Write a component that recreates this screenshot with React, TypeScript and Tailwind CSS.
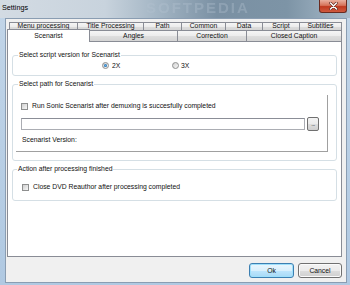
import React from "react";

const tabBg = "bg-[linear-gradient(180deg,#f5f5f5_0%,#ececec_50%,#dedede_51%,#d4d4d4_100%)]";

function Radio({ checked }: { checked?: boolean }) {
  return (
    <span className="w-[7px] h-[7px] rounded-full border border-[#8e8f8f] bg-[linear-gradient(135deg,#d0d0d0,#f8f8f8)] flex items-center justify-center shrink-0">
      {checked && <span className="w-[3px] h-[3px] rounded-full bg-[radial-gradient(circle,#5fb2ef,#0b4f8f)]" />}
    </span>
  );
}

function Check() {
  return (
    <span className="w-[7px] h-[7px] border border-[#8e8f8f] bg-[linear-gradient(135deg,#cfcfcf,#f7f7f7)] shrink-0" />
  );
}

function Group({ label, labelLeft, className, children }: { label: string; labelLeft: string; className: string; children?: React.ReactNode }) {
  return (
    <div className={`relative border border-[#d5dfe5] rounded-[3px] ${className}`}>
      <span className={`absolute top-[-5px] ${labelLeft} px-[1px] bg-white leading-[8px] whitespace-nowrap`}>{label}</span>
      {children}
    </div>
  );
}

export default function App() {
  const row1: [string, string][] = [
    ["Menu processing", "w-[68px]"],
    ["Title Processing", "w-[66px]"],
    ["Path", "w-[38px]"],
    ["Common", "w-[44px]"],
    ["Data", "w-[37px]"],
    ["Script", "w-[37px]"],
    ["Subtitles", "w-[43px]"],
  ];
  return (
    <div className="w-[350px] h-[285px] overflow-hidden flex flex-col bg-[linear-gradient(180deg,#c2d5e8,#b0c9e2)] font-['Liberation_Sans',Arial,sans-serif] text-[6.8px] text-[#111]">
      {/* title bar */}
      <div className="relative h-[18px] shrink-0 overflow-hidden flex justify-between items-start bg-[linear-gradient(90deg,#d3dbe3_0%,#c8d3dd_30%,#a3b5c4_45%,#7a90a3_62%,#7d94a6_82%,#aabccb_100%)]">
        <span className="absolute left-[146px] top-[0px] text-[15px] leading-[16px] font-bold tracking-[2px] text-[#b4c4d1]/35 blur-[0.7px]">SOFTPEDIA</span>
        <span className="relative pl-[2px] pt-[3px] text-[7.2px] leading-[9px] text-black">Settings</span>
        <div className="relative mr-[3px] w-[28px] h-[13px] rounded-b-[3px] border border-t-0 border-[#6a2b20] bg-[linear-gradient(180deg,#e9b0a0_0%,#d6735a_45%,#c0391f_55%,#cf5a3f_100%)] flex items-center justify-center">
          <svg width="9" height="8" viewBox="0 0 9 8">
            <path d="M1.5 1 L7.5 7 M7.5 1 L1.5 7" stroke="#5a2118" strokeWidth="2.6" strokeLinecap="round" />
            <path d="M1.5 1 L7.5 7 M7.5 1 L1.5 7" stroke="#ffffff" strokeWidth="1.5" strokeLinecap="round" />
          </svg>
        </div>
      </div>

      {/* client */}
      <div className="flex-1 ml-[5px] mr-[3px] mb-[2px] border border-[#8a9db2] bg-[#f0f0f0] flex flex-col">
        <div className="pl-[1px] pr-[4px]">
          {/* row 1 */}
          <div className="mt-[3px] h-[8px] pl-[2px] flex">
            {row1.map(([t, w], i) => (
              <div
                key={t}
                className={`${w} h-full border-t border-l ${i === row1.length - 1 ? "border-r" : ""} border-[#898c95] ${tabBg} flex items-start justify-center leading-[6px] whitespace-nowrap`}
              >
                {t}
              </div>
            ))}
          </div>
          {/* row 2 */}
          <div className="h-[11px] flex items-end">
            <div className="relative z-10 w-[83px] h-[13px] -mb-px border-t border-l border-r border-[#898c95] bg-white flex items-start justify-center pt-[1.5px] leading-[8px]">
              Scenarist
            </div>
            <div className={`w-[87px] h-full border-t border-[#898c95] ${tabBg} flex items-center justify-center leading-[8px]`}>Angles</div>
            <div className={`w-[69px] h-full border-t border-l border-[#898c95] ${tabBg} flex items-center justify-center leading-[8px]`}>Correction</div>
            <div className={`w-[96px] h-full border-t border-l border-r border-[#898c95] ${tabBg} flex items-center justify-center leading-[8px]`}>Closed Caption</div>
          </div>
          {/* pane */}
          <div className="h-[216px] border border-[#898c95] bg-white px-[4px] flex flex-col">
            <Group label="Select script version for Scenarist" labelLeft="left-[5px]" className="mt-[13px] h-[21px] shrink-0">
              <div className="h-full flex items-center pl-[89px]">
                <div className="w-[70px] flex items-center gap-[3px]">
                  <Radio checked />
                  <span className="leading-[8px]">2X</span>
                </div>
                <div className="flex items-center gap-[2px]">
                  <Radio />
                  <span className="leading-[8px]">3X</span>
                </div>
              </div>
            </Group>

            <Group label="Select path for Scenarist" labelLeft="left-[5px]" className="mt-[8px] h-[77px] shrink-0">
              <div className="ml-[3px] mr-[8px] mt-[10px] h-[57px] border-r border-b border-[#a0a0a0] flex flex-col">
                <div className="mt-[7px] h-[8px] pl-[5px] flex items-center gap-[4px]">
                  <Check />
                  <span className="leading-[8px] whitespace-nowrap">Run Sonic Scenarist after demuxing is succesfully completed</span>
                </div>
                <div className="mt-[7px] h-[14px] pl-[5px] flex items-center gap-[2px]">
                  <div className="w-[284px] h-[12px] border border-[#abadb3] border-t-[#8b8e97] bg-white" />
                  <div className="w-[12px] h-[14px] rounded-[2px] border border-[#707070] bg-[linear-gradient(180deg,#f2f2f2_0%,#ebebeb_50%,#dddddd_51%,#cfcfcf_100%)] flex items-end justify-center pb-[3px] text-[6px] leading-[6px] tracking-[-0.5px]">
                    ...
                  </div>
                </div>
                <div className="mt-[5px] h-[8px] pl-[6px] flex items-center">
                  <span className="leading-[8px]">Scenarist Version:</span>
                </div>
              </div>
            </Group>

            <Group label="Action after processing finished" labelLeft="left-[4px]" className="mt-[8px] h-[32px] shrink-0">
              <div className="mt-[13px] h-[8px] pl-[9px] flex items-center gap-[4px]">
                <Check />
                <span className="leading-[8px] whitespace-nowrap">Close DVD Reauthor after processing completed</span>
              </div>
            </Group>
          </div>
        </div>
        {/* buttons */}
        <div className="flex-1 flex justify-end items-start gap-[4px] pr-[4px] pt-[6px]">
          <div className="w-[45px] h-[15px] rounded-[3px] border border-[#3c7fb1] shadow-[inset_0_0_0_1px_#9fe0fb] bg-[linear-gradient(180deg,#eaf6fd_0%,#d9f0fc_50%,#bee6fd_51%,#a7d9f5_100%)] flex items-center justify-center leading-[8px]">
            Ok
          </div>
          <div className="w-[44px] h-[15px] rounded-[3px] border border-[#707070] shadow-[inset_0_0_0_1px_#fbfbfb] bg-[linear-gradient(180deg,#f2f2f2_0%,#ebebeb_50%,#dddddd_51%,#cfcfcf_100%)] flex items-center justify-center leading-[8px]">
            Cancel
          </div>
        </div>
      </div>
    </div>
  );
}
